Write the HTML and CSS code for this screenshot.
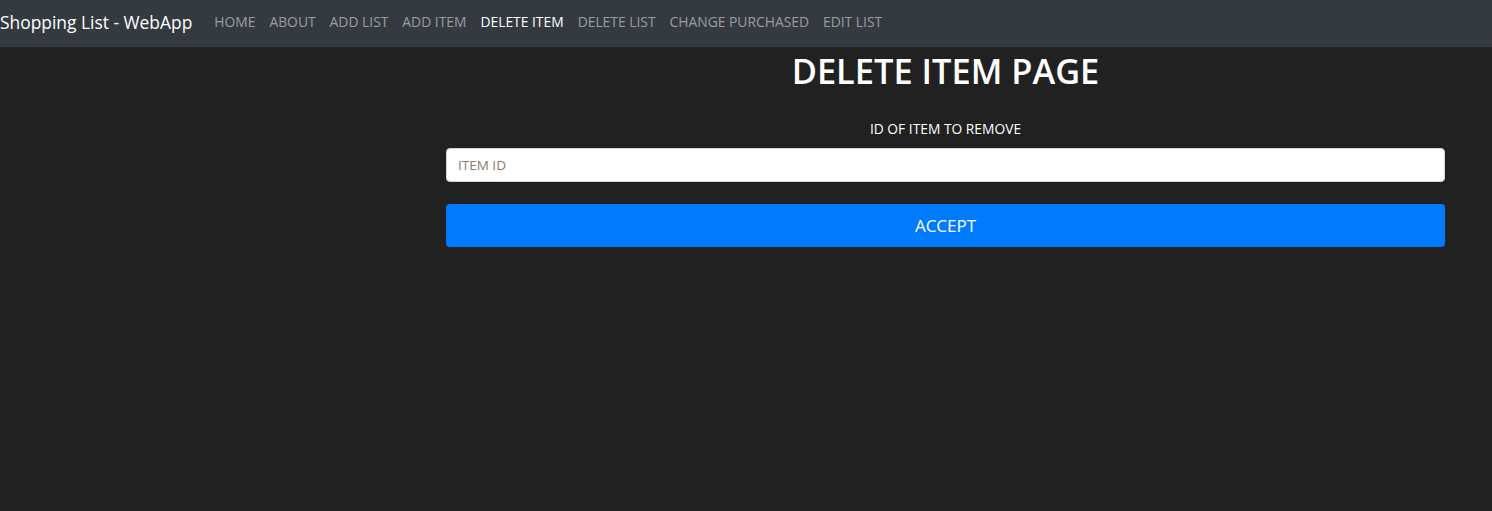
FILE: index.html
```html
<!DOCTYPE html>
<html>
<head>
<meta charset="utf-8">
<link rel="stylesheet" href="styles.css">
</head>
<body>
<nav class="navbar">
  <a class="brand">Shopping List - WebApp</a>
  <ul class="nav">
    <li><a class="nav-link">HOME</a></li>
    <li><a class="nav-link">ABOUT</a></li>
    <li><a class="nav-link">ADD LIST</a></li>
    <li><a class="nav-link">ADD ITEM</a></li>
    <li><a class="nav-link active">DELETE ITEM</a></li>
    <li><a class="nav-link">DELETE LIST</a></li>
    <li><a class="nav-link">CHANGE PURCHASED</a></li>
    <li><a class="nav-link">EDIT LIST</a></li>
  </ul>
</nav>
<main class="layout">
  <div class="side"></div>
  <section class="content">
    <h1 class="title">DELETE ITEM PAGE</h1>
    <form class="form">
      <label class="label" for="item">ID OF ITEM TO REMOVE</label>
      <input class="input" id="item" type="text" placeholder="ITEM ID">
      <button class="btn" type="button">ACCEPT</button>
    </form>
  </section>
</main>
</body>
</html>
```
FILE: styles.css
```css
* { box-sizing: border-box; }
html, body { margin: 0; padding: 0; }
body {
  background: #212121;
  color: #fff;
  font-family: "Open Sans", "Noto Sans", sans-serif;
  height: 511px;
  overflow: hidden;
}
.navbar {
  height: 47px;
  background: #343a40;
  display: flex;
  align-items: center;
  padding: 0 0 4px;
}
.brand {
  font-size: 17.4px;
  color: #fff;
  margin-right: 15px;
  white-space: nowrap;
}
.nav {
  list-style: none;
  margin: 0;
  padding: 0;
  display: flex;
}
.nav-link {
  display: block;
  padding: 8px 7px;
  font-size: 13.85px;
  color: rgba(255,255,255,.5);
  white-space: nowrap;
}
.nav-link.active { color: #fff; }
.layout {
  display: grid;
  grid-template-columns: 446px 999px 47px;
}
.content {
  display: flex;
  flex-direction: column;
  align-items: stretch;
}
.title {
  margin: 2px 0 0;
  text-align: center;
  font-size: 34.4px;
  font-weight: 600;
  line-height: 44px;
}
.form {
  display: flex;
  flex-direction: column;
  margin-top: 26px;
}
.label {
  text-align: center;
  font-size: 13.8px;
  line-height: 20px;
  margin-bottom: 9px;
}
.input {
  height: 34px;
  border: 1px solid #ced4da;
  border-radius: 4px;
  background: #fff;
  padding: 0 11px;
  font-family: inherit;
  font-size: 13.5px;
  color: #495057;
}
.input::placeholder { color: #8a7a6c; }
.btn {
  margin-top: 22px;
  height: 43px;
  border: none;
  border-radius: 4px;
  background: #007bff;
  color: #fff;
  font-family: inherit;
  font-size: 17px;
}
```
